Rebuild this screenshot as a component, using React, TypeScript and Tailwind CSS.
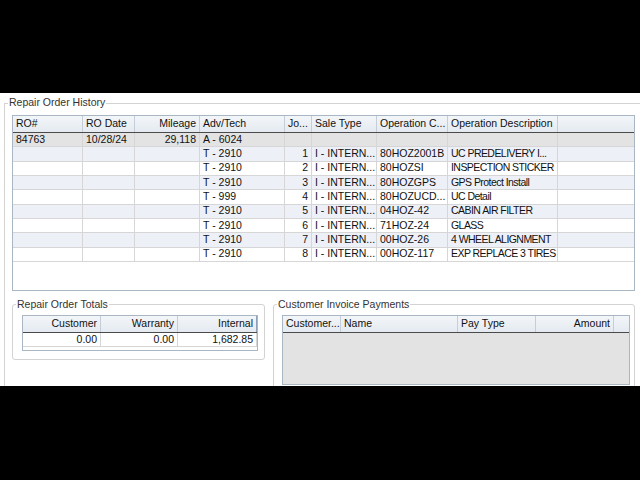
import React from "react";

type Job = {
  tech: string;
  job: number;
  code: string;
  desc: string;
};

const jobs: Job[] = [
  { tech: "T - 2910", job: 1, code: "80HOZ2001B", desc: "UC PREDELIVERY I..." },
  { tech: "T - 2910", job: 2, code: "80HOZSI", desc: "INSPECTION STICKER" },
  { tech: "T - 2910", job: 3, code: "80HOZGPS", desc: "GPS Protect Install" },
  { tech: "T - 999", job: 4, code: "80HOZUCD...", desc: "UC Detail" },
  { tech: "T - 2910", job: 5, code: "04HOZ-42", desc: "CABIN AIR FILTER" },
  { tech: "T - 2910", job: 6, code: "71HOZ-24", desc: "GLASS" },
  { tech: "T - 2910", job: 7, code: "00HOZ-26", desc: "4 WHEEL ALIGNMENT" },
  { tech: "T - 2910", job: 8, code: "00HOZ-117", desc: "EXP REPLACE 3 TIRES" },
];

const headCell =
  "flex h-full shrink-0 items-center overflow-hidden whitespace-nowrap border-r border-[#c5ced8] px-[3px]";
const cell =
  "flex h-full shrink-0 items-center overflow-hidden whitespace-nowrap border-r border-[#d6d6d6] px-[3px]";

function HistoryRow({
  bg,
  ro = "",
  date = "",
  mileage = "",
  tech,
  job = "",
  sale = "",
  code = "",
  desc = "",
}: {
  bg: string;
  ro?: string;
  date?: string;
  mileage?: string;
  tech: string;
  job?: string;
  sale?: string;
  code?: string;
  desc?: string;
}) {
  return (
    <div className={`flex h-[14.33px] border-b border-[#d6d6d6] ${bg}`}>
      <div className={`${cell} w-[70px]`}>{ro}</div>
      <div className={`${cell} w-[52px]`}>{date}</div>
      <div className={`${cell} w-[65px] justify-end`}>{mileage}</div>
      <div className={`${cell} w-[85px]`}>{tech}</div>
      <div className={`${cell} w-[27px] justify-end`}>{job}</div>
      <div className={`${cell} w-[65px]`}>{sale}</div>
      <div className={`${cell} w-[71px]`}>{code}</div>
      <div className={`${cell} w-[110px] tracking-[-0.55px]`}>{desc}</div>
      <div className="flex-1" />
    </div>
  );
}

function RepairOrderGrid() {
  return (
    <div className="flex h-[176px] w-[623px] flex-col border border-[#a9b6c4] bg-white">
      <div className="flex h-[17px] shrink-0 border-b border-[#4a4a4a] bg-gradient-to-b from-[#f3f6f9] to-[#e4eaf1]">
        <div className={`${headCell} w-[70px]`}>RO#</div>
        <div className={`${headCell} w-[52px]`}>RO Date</div>
        <div className={`${headCell} w-[65px] justify-end`}>Mileage</div>
        <div className={`${headCell} w-[85px]`}>Adv/Tech</div>
        <div className={`${headCell} w-[27px]`}>Jo...</div>
        <div className={`${headCell} w-[65px]`}>Sale Type</div>
        <div className={`${headCell} w-[71px]`}>Operation C...</div>
        <div className={`${headCell} w-[110px]`}>Operation Description</div>
        <div className="flex-1" />
      </div>
      <HistoryRow
        bg="bg-[#e3e3e3]"
        ro="84763"
        date="10/28/24"
        mileage="29,118"
        tech="A - 6024"
      />
      {jobs.map((j) => (
        <HistoryRow
          key={j.job}
          bg={j.job % 2 === 1 ? "bg-[#eef0f8]" : "bg-white"}
          tech={j.tech}
          job={String(j.job)}
          sale="I - INTERN..."
          code={j.code}
          desc={j.desc}
        />
      ))}
    </div>
  );
}

function GroupBox({
  title,
  className,
  children,
}: {
  title: string;
  className: string;
  children: React.ReactNode;
}) {
  return (
    <fieldset className={`rounded-[3px] border border-[#d3d3d3] ${className}`}>
      <legend className="ml-[3px] px-[1px] leading-[13px] text-[#333]">{title}</legend>
      {children}
    </fieldset>
  );
}

function TotalsTable() {
  return (
    <div className="flex h-[36px] w-[236px] flex-col border border-[#a9b6c4] bg-white">
      <div className="flex h-[17px] shrink-0 border-b border-[#4a4a4a] bg-gradient-to-b from-[#f3f6f9] to-[#e4eaf1]">
        <div className={`${headCell} w-[78px] justify-end`}>Customer</div>
        <div className={`${headCell} w-[77px] justify-end`}>Warranty</div>
        <div className={`${headCell} flex-1 justify-end border-r-[#8da0b5]`}>Internal</div>
      </div>
      <div className="flex h-[14px] shrink-0 border-b border-[#d6d6d6]">
        <div className={`${cell} w-[78px] justify-end`}>0.00</div>
        <div className={`${cell} w-[77px] justify-end`}>0.00</div>
        <div className={`${cell} flex-1 justify-end`}>1,682.85</div>
      </div>
    </div>
  );
}

function PaymentsTable() {
  return (
    <div className="flex h-[70px] w-[348px] flex-col border border-[#a9b6c4] bg-[#e3e3e3]">
      <div className="flex h-[17px] shrink-0 border-b border-[#4a4a4a] bg-gradient-to-b from-[#f3f6f9] to-[#e4eaf1]">
        <div className={`${headCell} w-[58px]`}>Customer...</div>
        <div className={`${headCell} w-[117px]`}>Name</div>
        <div className={`${headCell} w-[78px]`}>Pay Type</div>
        <div className={`${headCell} w-[78px] justify-end`}>Amount</div>
        <div className="flex-1" />
      </div>
    </div>
  );
}

export default function App() {
  return (
    <div className="flex h-[480px] w-[640px] flex-col overflow-hidden bg-black font-['Liberation_Sans',Arial,sans-serif] text-[10.5px] text-[#111]">
      <div className="h-[93px] shrink-0" />
      <div className="h-[293px] w-[640px] shrink-0 overflow-hidden bg-white">
        {/* outer group: only left and top edges are visible in the frame */}
        <div className="relative ml-[4px] mt-[10px] w-[700px] border-l border-t border-[#d3d3d3] pl-[7px] pt-[11px]">
          <span className="absolute left-[3px] top-[-8px] bg-white px-[1px] leading-[13px] text-[#333]">
            Repair Order History
          </span>
          <div className="flex flex-col">
            <RepairOrderGrid />
            <div className="mt-[7px] flex gap-[8px]">
              <GroupBox title="Repair Order Totals" className="h-[62px] w-[253px]">
                <div className="pl-[9px] pt-[4px]">
                  <TotalsTable />
                </div>
              </GroupBox>
              <GroupBox title="Customer Invoice Payments" className="h-[100px] w-[362px]">
                <div className="pl-[8px] pt-[4px]">
                  <PaymentsTable />
                </div>
              </GroupBox>
            </div>
          </div>
        </div>
      </div>
      <div className="flex-1" />
    </div>
  );
}
